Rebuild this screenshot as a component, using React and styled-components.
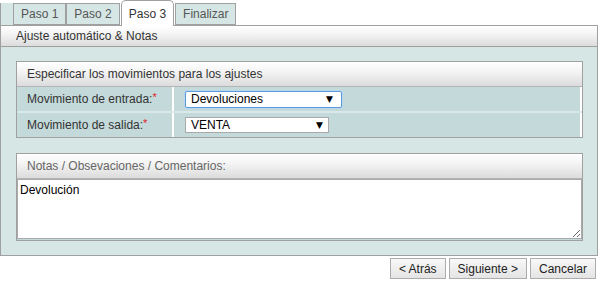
import React from "react";
import styled, { createGlobalStyle } from "styled-components";

const Global = createGlobalStyle`
  html, body { margin: 0; padding: 0; background: #fff; }
  body { font-family: "Liberation Sans", Arial, sans-serif; font-size: 12px; color: #333; }
`;

const Wrapper = styled.div`
  width: 598px;
`;

const TabBar = styled.div`
  display: flex;
  align-items: flex-end;
  height: 25px;
`;

const TabSpacer = styled.div`
  width: 12px;
  height: 22px;
  background: #d6e6e5;
  border-left: 1px solid #a0a0a0;
`;

const Tab = styled.div`
  box-sizing: border-box;
  padding: 0 7px;
  margin-right: ${(p) => (p.$active ? "1px" : "0")};
  margin-left: ${(p) => (p.$active ? "1px" : "0")};
  height: ${(p) => (p.$active ? "26px" : "22px")};
  line-height: 21px;
  padding-top: ${(p) => (p.$active ? "3px" : "0")};
  margin-bottom: ${(p) => (p.$active ? "-1px" : "0")};
  border: 1px solid #a0a0a0;
  border-bottom: ${(p) => (p.$active ? "none" : "1px solid #a0a0a0")};
  border-radius: ${(p) => (p.$active ? "5px 5px 0 0" : "0")};
  background: ${(p) => (p.$active ? "#fff" : "#d6e6e5")};
  color: ${(p) => (p.$active ? "#333" : "#555")};
  position: relative;
  z-index: ${(p) => (p.$active ? 1 : 0)};
  white-space: nowrap;
`;

const Panel = styled.div`
  border: 1px solid #a0a0a0;
  background: #d6e6e5;
`;

const PanelHeader = styled.div`
  height: 20px;
  line-height: 20px;
  padding-left: 15px;
  background: linear-gradient(#ffffff, #f4f4f4 40%, #dcdcdc);
  border-bottom: 1px solid #a0a0a0;
  color: #333;
`;

const PanelBody = styled.div`
  display: flex;
  flex-direction: column;
  gap: 15px;
  padding: 14px 14px 14px 15px;
`;

const Fieldset = styled.div`
  border: 1px solid #a0a0a0;
  background: #c4d9da;
`;

const FieldHeader = styled.div`
  height: 24px;
  line-height: 24px;
  padding-left: 10px;
  background: linear-gradient(#ffffff, #f4f4f4 40%, #dcdcdc);
  border-bottom: 1px solid #b4b4b4;
  color: ${(p) => (p.$muted ? "#666" : "#333")};
`;

const Row = styled.div`
  display: grid;
  grid-template-columns: 157px 1fr;
  height: 24px;
  border-bottom: ${(p) => (p.$last ? "none" : "2px solid #d9e8e8")};
`;

const LabelCell = styled.div`
  display: flex;
  align-items: center;
  padding-left: 10px;
  border-right: 2px solid #fff;
  color: #333;
`;

const Required = styled.span`
  color: #e0202a;
  font-size: 11px;
  position: relative;
  top: -2px;
`;

const ValueCell = styled.div`
  display: flex;
  align-items: center;
  padding-left: 11px;
  border-right: 2px solid #fff;
`;

const SelectBox = styled.div`
  box-sizing: border-box;
  width: ${(p) => p.$w}px;
  height: ${(p) => (p.$focused ? 17 : 16)}px;
  display: flex;
  align-items: center;
  justify-content: space-between;
  padding: 0 ${(p) => (p.$focused ? 8 : 5)}px 0 5px;
  background: #fff;
  border: 1px solid ${(p) => (p.$focused ? "#5b9bd8" : "#a9a9a9")};
  border-radius: ${(p) => (p.$focused ? "2px" : "0")};
  box-shadow: ${(p) => (p.$focused ? "0 0 0 1px #b9d5f0" : "none")};
  color: #000;
  font-size: 12px;
`;

const Arrow = styled.span`
  font-family: "DejaVu Sans", sans-serif;
  font-size: 9px;
  line-height: 9px;
  color: #000;
`;

const NotesArea = styled.textarea`
  display: block;
  box-sizing: border-box;
  width: 100%;
  height: 60px;
  margin: 0 0 1px 0;
  padding: 3px 2px;
  border: 1px solid #aaa;
  background: #fff;
  font-family: "Liberation Sans", Arial, sans-serif;
  font-size: 12px;
  color: #000;
  outline: none;
`;

const NotesBody = styled.div`
  background: #d6e6e5;
`;

const ButtonBar = styled.div`
  display: flex;
  justify-content: flex-end;
  gap: 3px;
  padding: 2px 2px 0 0;
`;

const Button = styled.button`
  height: 21px;
  padding: 0 8px;
  margin: 0;
  border: 1px solid #acacac;
  border-radius: 0;
  background: linear-gradient(#f8f8f8, #e4e4e4);
  font-family: "Liberation Sans", Arial, sans-serif;
  font-size: 12px;
  color: #222;
  cursor: pointer;
`;

export default function App() {
  return (
    <>
      <Global />
      <Wrapper>
        <TabBar>
          <TabSpacer />
          <Tab>Paso 1</Tab>
          <Tab>Paso 2</Tab>
          <Tab $active>Paso 3</Tab>
          <Tab>Finalizar</Tab>
        </TabBar>
        <Panel>
          <PanelHeader>Ajuste automático &amp; Notas</PanelHeader>
          <PanelBody>
            <Fieldset>
              <FieldHeader>Especificar los movimientos para los ajustes</FieldHeader>
              <Row>
                <LabelCell>
                  Movimiento de entrada:<Required>*</Required>
                </LabelCell>
                <ValueCell>
                  <SelectBox $w={157} $focused>
                    <span>Devoluciones</span>
                    <Arrow>▼</Arrow>
                  </SelectBox>
                </ValueCell>
              </Row>
              <Row $last>
                <LabelCell>
                  Movimiento de salida:<Required>*</Required>
                </LabelCell>
                <ValueCell>
                  <SelectBox $w={144}>
                    <span>VENTA</span>
                    <Arrow>▼</Arrow>
                  </SelectBox>
                </ValueCell>
              </Row>
            </Fieldset>
            <Fieldset>
              <FieldHeader $muted>Notas / Obsevaciones / Comentarios:</FieldHeader>
              <NotesBody>
                <NotesArea defaultValue="Devolución" />
              </NotesBody>
            </Fieldset>
          </PanelBody>
        </Panel>
        <ButtonBar>
          <Button>&lt; Atrás</Button>
          <Button>Siguiente &gt;</Button>
          <Button>Cancelar</Button>
        </ButtonBar>
      </Wrapper>
    </>
  );
}
